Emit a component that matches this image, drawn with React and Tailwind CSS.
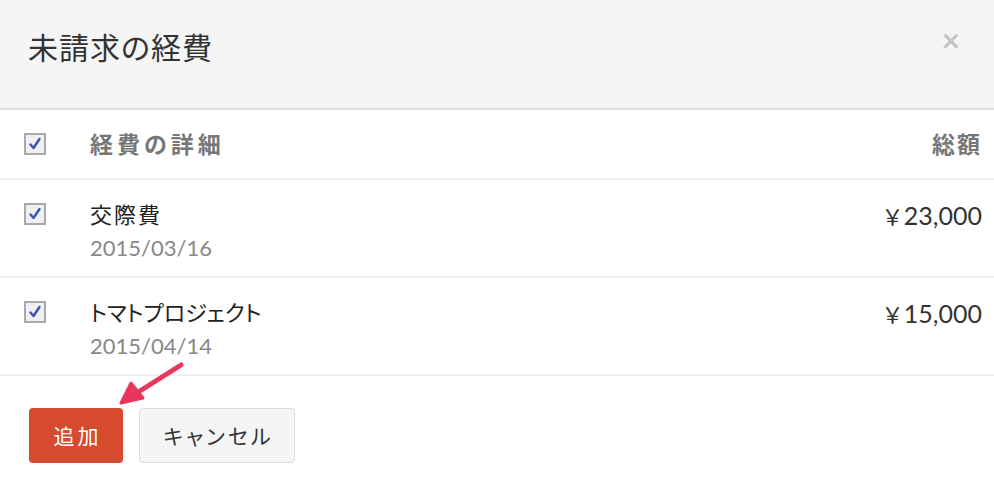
import React from "react";

const rows = [
  { name: "交際費", nameClass: "tracking-[2px]", date: "2015/03/16", amount: "23,000" },
  { name: "トマトプロジェクト", nameClass: "tracking-normal", date: "2015/04/14", amount: "15,000" },
];

function Check() {
  return (
    <span className="flex h-[22px] w-[22px] items-center justify-center border-2 border-[#a9a9a9] bg-[#eef0f5]">
      <svg width="14" height="14" viewBox="0 0 14 14">
        <path d="M2.5 7.5 L5.5 11 L11.5 2" fill="none" stroke="#3d55a8" strokeWidth="2.4" strokeLinecap="round" strokeLinejoin="round" />
      </svg>
    </span>
  );
}

export default function App() {
  return (
    <div className="h-[495px] w-[994px] overflow-hidden bg-white font-['Lato','Noto_Sans_CJK_JP',sans-serif] [font-feature-settings:'palt']">
      <div className="flex h-[110px] items-start justify-between border-b-2 border-[#dedede] bg-[#f5f5f5] pl-7 pr-[34px] pt-[25px]">
        <h1 className="text-[30px] leading-[44px] tracking-[1px] text-[#333]">未請求の経費</h1>
        <span className="mt-[-7px] text-[32px] font-bold leading-[44px] text-[#c4c4c4]">×</span>
      </div>

      <div className="flex h-[70px] items-center border-b-2 border-[#efefef] pl-6 pr-3">
        <Check />
        <span className="ml-[44px] flex-1 text-[23px] font-bold tracking-[4px] text-[#777]">経費の詳細</span>
        <span className="text-[23px] font-bold tracking-[2px] text-[#777]">総額</span>
      </div>

      {rows.map((r) => (
        <div key={r.date} className="flex h-[98px] items-start border-b-2 border-[#efefef] pl-6 pr-3 pt-[21px]">
          <span className="mt-[2px]"><Check /></span>
          <div className="ml-[44px] flex flex-1 flex-col">
            <span className={`text-[22px] leading-[28px] text-[#222] ${r.nameClass}`}>{r.name}</span>
            <span className="mt-[5px] text-[22px] leading-[28px] text-[#888]">{r.date}</span>
          </div>
          <span className="text-[25px] leading-[28px] text-[#333]">
            <span className="mr-[3px] text-[22px]">￥</span>
            {r.amount}
          </span>
        </div>
      ))}

      <div className="relative flex gap-4 pl-[29px] pt-[32px]">
        <button className="h-[55px] w-[94px] rounded-[4px] bg-[#d64a2e] pl-[3px] text-[21px] tracking-[3px] text-white">追加</button>
        <button className="h-[55px] w-[156px] rounded-[4px] border border-[#dcdcdc] bg-[#f5f5f5] pl-[3px] text-[21px] tracking-[3px] text-[#333]">キャンセル</button>
        <svg className="absolute left-[110px] top-[-14px]" width="80" height="50" viewBox="0 0 80 50">
          <line x1="71" y1="3" x2="22" y2="34" stroke="#e8365d" strokeWidth="5" strokeLinecap="round" />
          <path d="M11 41 L21 21 L33 36 Z" fill="#e8365d" stroke="#e8365d" strokeWidth="3" strokeLinejoin="round" />
        </svg>
      </div>
    </div>
  );
}
